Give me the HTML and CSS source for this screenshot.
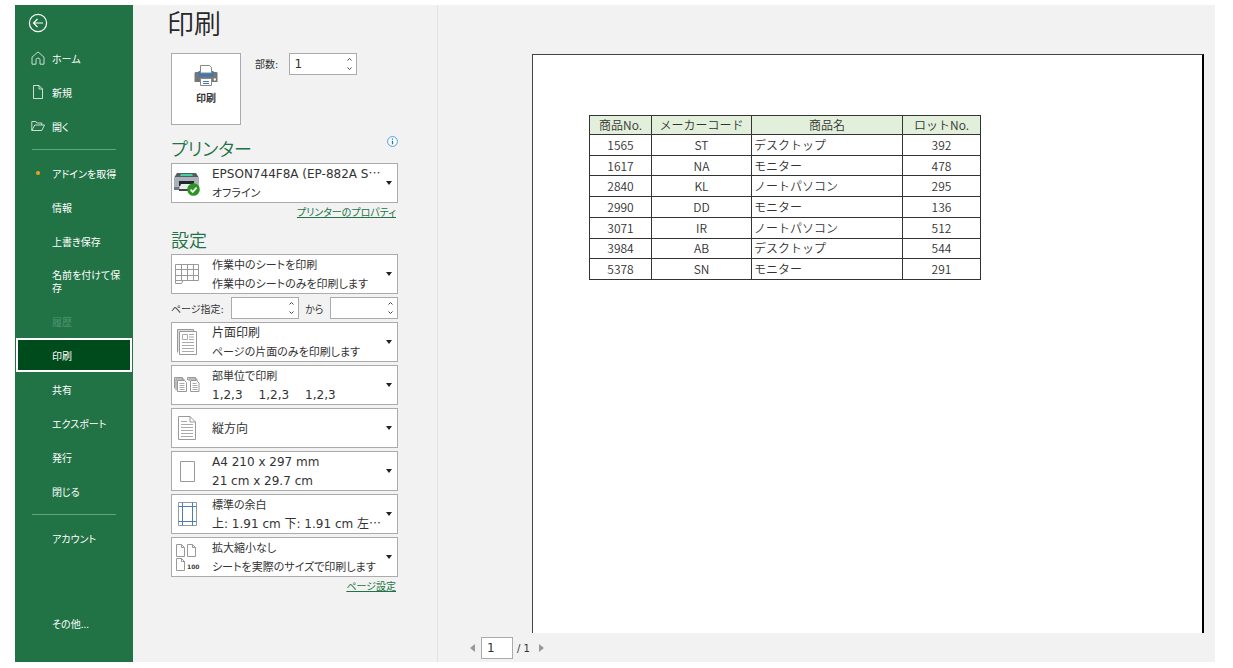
FILE: index.html
```html
<!DOCTYPE html>
<html lang="ja">
<head>
<meta charset="utf-8">
<title>印刷</title>
<link rel="stylesheet" href="styles.css">
</head>
<body>
<div class="app">
  <nav class="sidebar" aria-label="ファイル">
    <button class="back" aria-label="戻る">
      <svg width="20" height="20" viewBox="0 0 20 20"><circle cx="10" cy="10" r="8.6"/><path d="M15 10H5.5M9.5 6L5.500 10l4 4"/></svg>
    </button>
    <a class="item" href="#home"><svg class="nav-icon" width="14" height="14" viewBox="0 0 14 14"><path d="M1 6.2L7 .9l6 5.3v7H9V8.8C9 7.6 8.300 7.200 7 7.200S5 7.600 5 8.800v4.400H1z"/></svg>ホーム</a>
    <a class="item" href="#new"><svg class="nav-icon" width="14" height="14" viewBox="0 0 14 14"><path d="M2.500.5h5.500l3.500 3.500v9.500h-9zM8 .5V4h3.500"/></svg>新規</a>
    <a class="item" href="#open"><svg class="nav-icon" width="14" height="14" viewBox="0 0 14 14"><path d="M.8 11.500v-9h4l1 1.500h5v2M.8 11.500L3.800 6h9.700l-2.700 5.500z"/></svg>開く</a>
    <hr class="rule">
    <a class="item" href="#addins"><span class="dot"></span>アドインを取得</a>
    <a class="item" href="#info">情報</a>
    <a class="item" href="#save">上書き保存</a>
    <a class="item" href="#saveas">名前を付けて保存</a>
    <a class="item disabled" aria-disabled="true">履歴</a>
    <a class="item selected" href="#print" aria-current="page">印刷</a>
    <a class="item" href="#share">共有</a>
    <a class="item" href="#export">エクスポート</a>
    <a class="item" href="#publish">発行</a>
    <a class="item" href="#close">閉じる</a>
    <hr class="rule">
    <a class="item" href="#account">アカウント</a>
    <a class="item more" href="#more">その他...</a>
  </nav>

  <main class="main">
    <section class="settings">
      <h1>印刷</h1>
      <div class="print-row">
        <button class="print-button">
          <svg width="24" height="22" viewBox="0 0 24 22">
            <path fill="#777" d="M2 7h20c1 0 1.500.6 1.500 1.500V17h-23V8.500C.5 7.600 1 7 2 7z"/>
            <path fill="#3f77b5" d="M4.500 6h15v5.500h-15z"/>
            <path fill="#fff" stroke="#888" d="M6.500.5h9l2 2V8h-11zM6.500 13.500h11v7h-11z"/>
            <path fill="none" stroke="#3f77b5" d="M9 16.500h6M9 18.500h6"/>
            <circle cx="20.800" cy="14.500" r="1.200" fill="#fff"/>
          </svg>
          印刷
        </button>
        <label for="copies">部数:</label>
        <span class="spinner">
          <input id="copies" type="text" inputmode="numeric" value="1">
          <span class="steps">
            <button aria-label="部数を増やす"><svg width="5" height="3" viewBox="0 0 5 3"><path d="M.5 2.500l2-2 2 2"/></svg></button>
            <button aria-label="部数を減らす"><svg width="5" height="3" viewBox="0 0 5 3"><path d="M.5.5l2 2 2-2"/></svg></button>
          </span>
        </span>
      </div>

      <div class="heading-row">
        <h2>プリンター</h2>
        <button class="info" aria-label="プリンターの状態">
          <svg width="11" height="11" viewBox="0 0 11 11"><circle cx="5.500" cy="5.500" r="4.900" fill="#fff" stroke="#3c93d6" stroke-width=".9"/><path stroke="#1c77c4" stroke-width="1.300" d="M5.500 4.800v3.400M5.500 2.600v1.200"/></svg>
        </button>
      </div>
      <button class="picker" aria-haspopup="listbox">
        <span class="picker-icon">
          <svg width="28" height="26" viewBox="0 0 28 26">
            <path fill="#555b61" d="M4 3h19l2.500 4H1.500z"/><path fill="#45d09a" d="M8 4h11l1 2H7z"/>
            <path fill="#aab2ba" d="M1 7h25v11H1z"/><path fill="#6f777e" d="M1 17h25v3H1z"/>
            <path fill="#22272b" d="M6 11h15v5H6z"/><path fill="#e8edf0" d="M8 14h11l2 5H6z"/><path fill="#444" d="M6 19h12v2H6z"/>
            <circle cx="20.500" cy="19.500" r="6.300" fill="#2c9420"/><path fill="none" stroke="#fff" stroke-width="1.800" d="M17.500 19.700l2.200 2.200 3.900-4.300"/>
          </svg>
        </span>
        <span class="picker-text"><span>EPSON744F8A (EP-882A S<span class="dots">…</span></span><span class="kana">オフライン</span></span>
        <span class="caret"></span>
      </button>
      <a class="link" href="#printer-properties">プリンターのプロパティ</a>

      <h2 class="settings-heading">設定</h2>
      <div class="pickers">
        <button class="picker" aria-haspopup="listbox">
          <span class="picker-icon">
            <svg class="line" width="26" height="22" viewBox="0 0 26 22"><path fill="#fff" d="M1.500 1.500h23v16H9L7.500 20.500h-6z"/><path d="M1.500 6.500h23M1.500 12.500h23M7.500 1.500v16M13.500 1.500v16M19.500 1.500v16M1.500 17.500H9"/></svg>
          </span>
          <span class="picker-text"><span class="kana">作業中のシートを印刷</span><span class="kana">作業中のシートのみを印刷します</span></span>
          <span class="caret"></span>
        </button>
        <div class="range">
          <label for="from">ページ指定:</label>
          <span class="spinner">
            <input id="from" type="text" inputmode="numeric">
            <span class="steps">
              <button aria-label="開始ページを増やす"><svg width="5" height="3" viewBox="0 0 5 3"><path d="M.5 2.500l2-2 2 2"/></svg></button>
              <button aria-label="開始ページを減らす"><svg width="5" height="3" viewBox="0 0 5 3"><path d="M.5.5l2 2 2-2"/></svg></button>
            </span>
          </span>
          <label for="to">から</label>
          <span class="spinner">
            <input id="to" type="text" inputmode="numeric">
            <span class="steps">
              <button aria-label="終了ページを増やす"><svg width="5" height="3" viewBox="0 0 5 3"><path d="M.5 2.500l2-2 2 2"/></svg></button>
              <button aria-label="終了ページを減らす"><svg width="5" height="3" viewBox="0 0 5 3"><path d="M.5.5l2 2 2-2"/></svg></button>
            </span>
          </span>
        </div>
        <button class="picker" aria-haspopup="listbox">
          <span class="picker-icon">
            <svg class="line" width="20" height="26" viewBox="0 0 20 26"><path fill="#ddd" d="M.5 23.500V.5h16v2"/><path fill="#fff" d="M2.500 2.500h17v23h-17z"/><path stroke="#aaa" d="M5.500 5.500h5v5h-5zM12 5.500h5M12 8h5M12 10.500h5M5 13.500h12M5 16.500h12M5 19.500h12M5 22.500h12"/></svg>
          </span>
          <span class="picker-text"><span>片面印刷</span><span class="kana">ページの片面のみを印刷します</span></span>
          <span class="caret"></span>
        </button>
        <button class="picker" aria-haspopup="listbox">
          <span class="picker-icon">
            <svg class="line" width="26" height="16" viewBox="0 0 26 16"><path fill="#ddd" d="M.5 11.500V.5h8v2M2 13.500V2h8v2M13.500 3V.5h8v2M15 4V2h8v2"/><path fill="#fff" d="M3.500 3.500h7l2 2v9h-9zM16.500 3.500h6l2.500 2.500v8.500h-8.500z"/><path stroke="#aaa" d="M5.500 6.500h5M5.500 8.500h5M5.500 10.500h5M5.500 12.500h5M18.500 6.500h4M18.500 8.500h5M18.500 10.500h5M18.500 12.500h5"/></svg>
          </span>
          <span class="picker-text"><span class="kana">部単位で印刷</span><span class="sets"><span>1,2,3</span><span>1,2,3</span><span>1,2,3</span></span></span>
          <span class="caret"></span>
        </button>
        <button class="picker" aria-haspopup="listbox">
          <span class="picker-icon">
            <svg class="line" width="18" height="24" viewBox="0 0 18 24"><path fill="#fff" d="M.5.5h11.500l5.500 5.500v17.500H.5z"/><path d="M12 .5V6h5.500"/><path stroke="#aaa" d="M3 5.500h6M3 8.500h12M3 11.500h12M3 14.500h12M3 17.500h12M3 20.500h12"/></svg>
          </span>
          <span class="picker-text"><span>縦方向</span></span>
          <span class="caret"></span>
        </button>
        <button class="picker" aria-haspopup="listbox">
          <span class="picker-icon">
            <svg class="line" width="15" height="21" viewBox="0 0 15 21"><path fill="#fff" d="M.5.5h14v20H.5z"/></svg>
          </span>
          <span class="picker-text"><span>A4 210 x 297 mm</span><span>21 cm x 29.7 cm</span></span>
          <span class="caret"></span>
        </button>
        <button class="picker" aria-haspopup="listbox">
          <span class="picker-icon">
            <svg class="line" width="19" height="24" viewBox="0 0 19 24"><path fill="#fff" d="M.5.5h18v23H.5z"/><path stroke="#4a7ebb" d="M4.500.5v23M14.500.5v23M.5 4.500h18M.5 19.500h18"/></svg>
          </span>
          <span class="picker-text"><span class="kana">標準の余白</span><span>上: 1.91 cm 下: 1.91 cm 左<span class="dots">…</span></span></span>
          <span class="caret"></span>
        </button>
        <button class="picker" aria-haspopup="listbox">
          <span class="picker-icon">
            <svg class="line" width="25" height="27" viewBox="0 0 25 27"><path fill="#fff" d="M1.500.5h5l3 3v9h-8zM12.500.5h5l3 3v9h-8zM1.500 14.500h5l3 3v9h-8z"/><path d="M6.500.5v3h3M17.500.5v3h3M6.500 14.500v3h3"/><text x="12" y="25">100</text></svg>
          </span>
          <span class="picker-text"><span class="kana">拡大縮小なし</span><span class="kana">シートを実際のサイズで印刷します</span></span>
          <span class="caret"></span>
        </button>
      </div>
      <a class="link" href="#page-setup">ページ設定</a>
    </section>

    <section class="preview">
      <div class="paper">
        <table>
          <colgroup><col class="c-no"><col class="c-maker"><col class="c-name"><col class="c-lot"></colgroup>
          <thead><tr><th>商品No.</th><th>メーカーコード</th><th>商品名</th><th>ロットNo.</th></tr></thead>
          <tbody>
            <tr><td>1565</td><td>ST</td><td>デスクトップ</td><td>392</td></tr>
            <tr><td>1617</td><td>NA</td><td>モニター</td><td>478</td></tr>
            <tr><td>2840</td><td>KL</td><td>ノートパソコン</td><td>295</td></tr>
            <tr><td>2990</td><td>DD</td><td>モニター</td><td>136</td></tr>
            <tr><td>3071</td><td>IR</td><td>ノートパソコン</td><td>512</td></tr>
            <tr><td>3984</td><td>AB</td><td>デスクトップ</td><td>544</td></tr>
            <tr><td>5378</td><td>SN</td><td>モニター</td><td>291</td></tr>
          </tbody>
        </table>
      </div>
      <div class="pager">
        <button aria-label="前のページ"><svg width="5" height="8" viewBox="0 0 5 8"><path d="M5 0v8L0 4z"/></svg></button>
        <input type="text" value="1" aria-label="ページ番号">
        <span>/ 1</span>
        <button aria-label="次のページ"><svg width="5" height="8" viewBox="0 0 5 8"><path d="M0 0v8l5-4z"/></svg></button>
      </div>
    </section>
  </main>
</div>
</body>
</html>
```

FILE: styles.css
```css
* { box-sizing: border-box; }

body {
  margin: 0;
  background: #fff;
  color: #333;
  font-family: "DejaVu Sans", "Noto Sans CJK JP", sans-serif;
  font-size: 10px;
  font-feature-settings: "palt";
}

button, input {
  margin: 0;
  padding: 0;
  border: 0;
  background: none;
  color: inherit;
  font: inherit;
  font-feature-settings: inherit;
}

svg { display: block; }

.app {
  display: flex;
  min-height: 100vh;
  padding: 5px 18px 6px 15px;
}

/* Sidebar */
.sidebar {
  display: flex;
  flex-direction: column;
  flex: 0 0 118px;
  background: #217346;
  color: #fff;
  font-family: "Noto Sans CJK JP", sans-serif;
}

.sidebar svg { fill: none; stroke: #fff; }
.back { align-self: flex-start; margin: 8px 0 8px 13px; }
.back svg { stroke-width: 1.2; }

.item {
  display: flex;
  align-items: center;
  min-height: 34px;
  padding: 10px 12px 10px 37px;
  color: inherit;
  font-size: 10px;
  line-height: 13px;
  text-decoration: none;
  word-break: break-all;
}

.nav-icon { flex: none; margin: 0 7px 0 -21px; opacity: .85; }
.nav-icon path { stroke-width: .9; }

.dot {
  flex: none;
  width: 4px;
  height: 4px;
  margin: 0 12px 0 -16px;
  border-radius: 50%;
  background: #f5a11c;
}

.disabled { color: #4f9470; }

.selected {
  margin: 0 1px;
  padding: 0 12px 0 34px;
  border: 2px solid #fff;
  background: #004b1c;
}

.rule {
  width: 84px;
  margin: 6px 17px;
  border: 0;
  border-top: 1px solid #5fa57c;
}

.more { margin: auto 0 22px; }

/* Main area */
.main {
  display: flex;
  flex: 1;
  min-width: 0;
  background: #f2f2f2;
}

.settings {
  display: flex;
  flex-direction: column;
  flex: 0 0 305px;
  min-width: 0;
  padding: 0 39px 0 38px;
  border-right: 1px solid #e3e3e3;
}

h1, h2 {
  margin: 0;
  font-family: "Noto Sans CJK JP", sans-serif;
  font-weight: 350;
}

h1 {
  margin: 0 0 13px -4px;
  color: #262626;
  font-size: 27px;
  line-height: 35px;
}

h2 {
  color: #217346;
  font-size: 18px;
  line-height: 24px;
}

.print-row { display: flex; align-items: flex-start; }
.print-row label { margin: 0 11px 0 14px; line-height: 24px; }

.print-button {
  display: flex;
  flex-direction: column;
  align-items: center;
  gap: 3px;
  width: 70px;
  height: 72px;
  padding-top: 11px;
  border: 1px solid #ababab;
  background: #fff;
  font-weight: 700;
}

.spinner {
  display: flex;
  width: 68px;
  height: 22px;
  border: 1px solid #ababab;
  background: #fff;
}

.spinner input { flex: 1; min-width: 0; padding-left: 4px; font-size: 12px; }

.steps {
  display: flex;
  flex-direction: column;
  justify-content: space-between;
  padding: 4px;
}

.steps path { fill: none; stroke: #444; }

.heading-row {
  display: flex;
  justify-content: space-between;
  align-items: flex-start;
  margin: 11px 0 3px;
}

.picker {
  display: flex;
  align-items: center;
  width: 100%;
  height: 40px;
  padding-right: 5px;
  border: 1px solid #ababab;
  background: #fff;
  font-size: 12px;
  line-height: 19px;
  text-align: left;
  white-space: nowrap;
}

.picker-icon { display: flex; justify-content: center; flex: 0 0 30px; margin-right: 10px; }
.picker-text { display: flex; flex-direction: column; flex: 1; min-width: 0; padding-top: 2px; }
.kana { font-size: 11px; }
.dots { font-family: "Noto Sans CJK JP", sans-serif; line-height: 1; }
.sets { display: flex; gap: 16px; }

.caret {
  border: 3px solid transparent;
  border-top: 4px solid #222;
  border-bottom: 0;
}

.line { fill: none; stroke: #999; }
.line text { fill: #444; stroke: none; font-size: 6px; font-weight: 700; }

.link {
  align-self: flex-end;
  margin-right: 2px;
  color: #217346;
  line-height: 20px;
}

.settings-heading { margin: 4px 0 3px; }
.pickers { display: flex; flex-direction: column; gap: 3px; }

.range {
  display: flex;
  align-items: center;
  justify-content: space-between;
}

/* Preview */
.preview {
  display: flex;
  flex-direction: column;
  flex: 1;
  min-width: 0;
  padding: 49px 11px 3px 32px;
}

.paper {
  flex: 1;
  margin-left: 62px;
  padding: 60px 56px;
  border: 1px solid #444;
  border-right: 2px solid #000;
  border-bottom: 0;
  background: #fff;
}

table {
  height: 165px;
  border-collapse: collapse;
  table-layout: fixed;
  width: 391px;
  font-family: "Noto Sans CJK JP", sans-serif;
  font-size: 12px;
  font-weight: 350;
  font-feature-settings: normal;
  line-height: 18px;
}

th, td { padding: 0; border: 1px solid #333; text-align: center; }
th { background: #e2efda; font-weight: 350; }
td:nth-child(3) { padding-left: 2px; text-align: left; }
.c-no { width: 62px; }
.c-maker { width: 100px; }
.c-name { width: 151px; }
.c-lot { width: 78px; }

.pager { display: flex; align-items: center; gap: 4px; margin-top: 4px; }
.pager button { width: 7px; }
.pager path { fill: #999; }
.pager input {
  width: 32px;
  height: 22px;
  padding-left: 5px;
  border: 1px solid #ababab;
  background: #fff;
  font-size: 12px;
}
.pager span { margin-right: 5px; }
```
